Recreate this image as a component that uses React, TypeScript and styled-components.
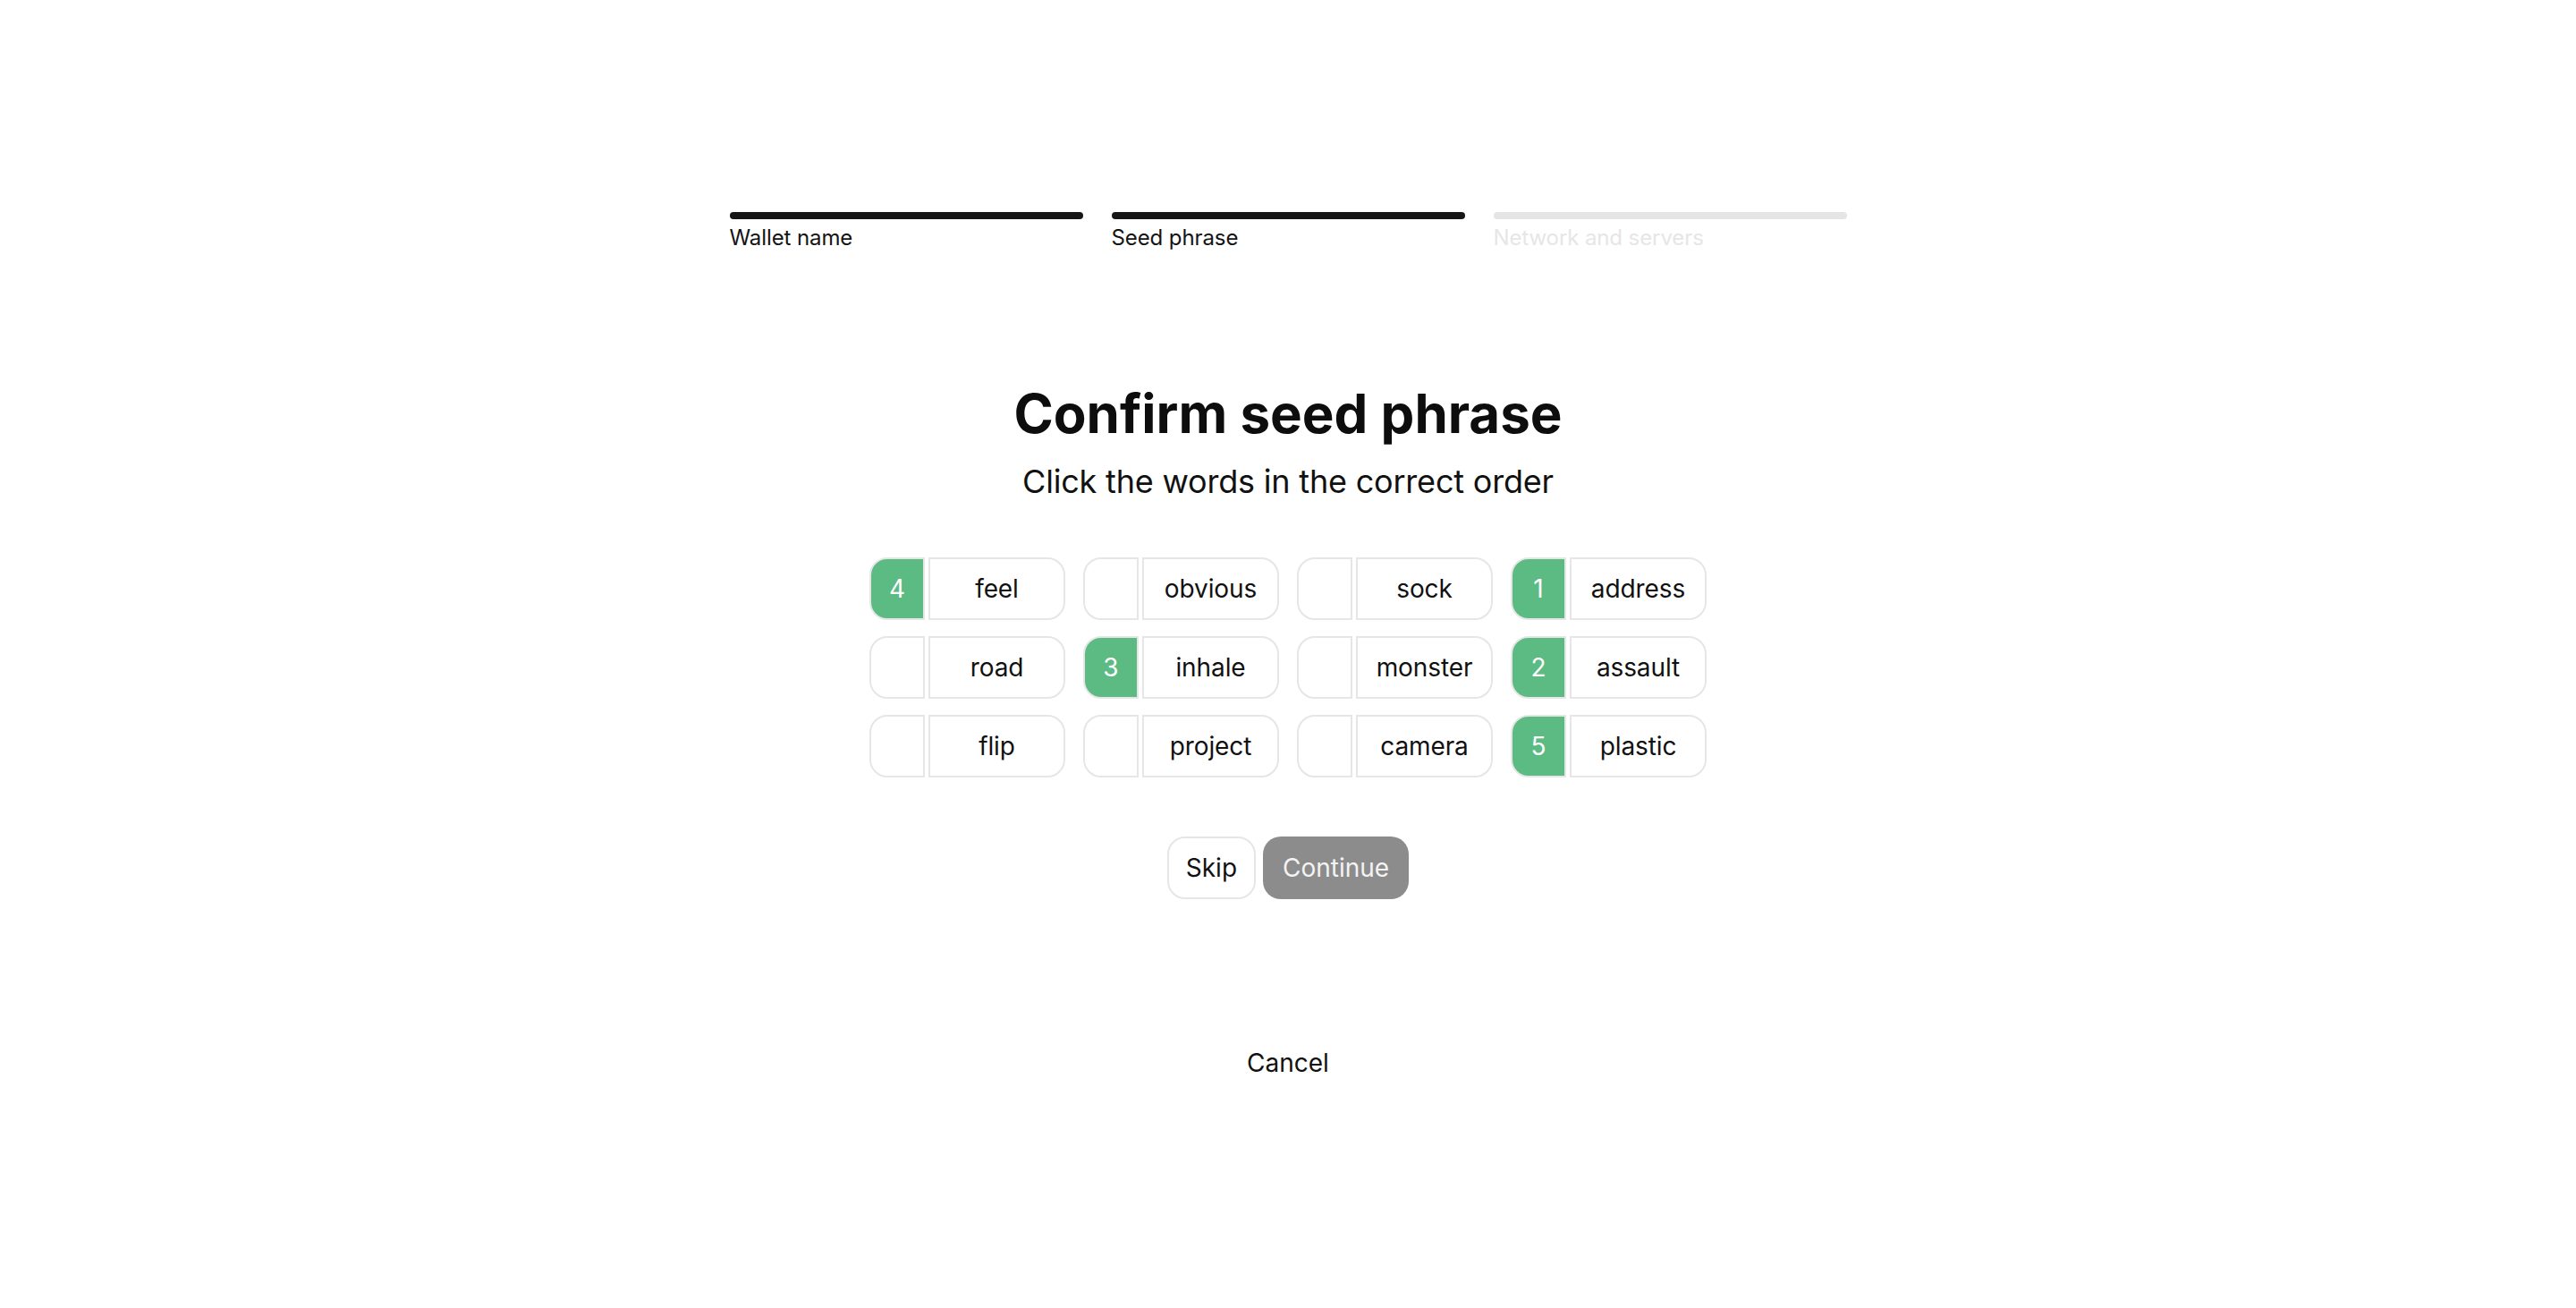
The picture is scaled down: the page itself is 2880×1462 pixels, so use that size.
import React from "react";
import styled, { createGlobalStyle } from "styled-components";

const Global = createGlobalStyle`
  html, body { margin: 0; padding: 0; background: #ffffff; }
  body { font-family: Inter, "Noto Sans", "Liberation Sans", sans-serif; color: #111111; }
`;

const Page = styled.main`
  display: flex;
  flex-direction: column;
  align-items: center;
  padding-top: 237px;
  min-height: 1462px;
  box-sizing: border-box;
`;

const Stepper = styled.div`
  display: grid;
  grid-template-columns: repeat(3, 395px);
  column-gap: 32px;
`;

const Step = styled.div`
  display: flex;
  flex-direction: column;
  gap: 7px;
`;

const Bar = styled.div<{ $active: boolean }>`
  height: 8px;
  border-radius: 4px;
  background: ${(p) => (p.$active ? "#161616" : "#e5e5e5")};
`;

const StepLabel = styled.span<{ $active: boolean }>`
  font-size: 24px;
  line-height: 1.2;
  letter-spacing: -0.1px;
  color: ${(p) => (p.$active ? "#141414" : "#e6e6e6")};
`;

const Title = styled.h1`
  margin: 145px 0 0;
  font-size: 60px;
  line-height: 1.2;
  font-weight: 700;
  letter-spacing: 0;
  color: #0d0d0d;
`;

const Subtitle = styled.p`
  margin: 19px 0 0;
  font-size: 36px;
  line-height: 1.2;
  letter-spacing: -0.2px;
  color: #111111;
`;

const WordGrid = styled.div`
  margin-top: 63px;
  display: grid;
  grid-template-columns: repeat(4, 219px);
  column-gap: 20px;
  row-gap: 18px;
`;

const Chip = styled.button`
  display: flex;
  gap: 4px;
  height: 70px;
  padding: 0;
  border: none;
  background: transparent;
  cursor: pointer;
  font-family: inherit;
`;

const NumberCell = styled.span<{ $filled: boolean }>`
  width: 62px;
  box-sizing: border-box;
  display: flex;
  align-items: center;
  justify-content: center;
  border: 2px solid #e6e6e6;
  border-radius: 20px 0 0 20px;
  background: ${(p) => (p.$filled ? "#5cba83" : "#ffffff")};
  color: #ffffff;
  font-size: 28px;
`;

const WordCell = styled.span`
  flex: 1;
  box-sizing: border-box;
  display: flex;
  align-items: center;
  justify-content: center;
  border: 2px solid #e6e6e6;
  border-radius: 0 20px 20px 0;
  background: #ffffff;
  color: #111111;
  font-size: 28px;
  padding-top: 1px;
  letter-spacing: -0.1px;
`;

const Actions = styled.div`
  margin-top: 66px;
  display: flex;
  gap: 8px;
`;

const Button = styled.button<{ $primary?: boolean }>`
  height: 70px;
  box-sizing: border-box;
  padding: 0 ${(p) => (p.$primary ? "22px" : "19px")};
  border-radius: 20px;
  border: ${(p) => (p.$primary ? "none" : "2px solid #e6e6e6")};
  background: ${(p) => (p.$primary ? "#8c8c8c" : "#ffffff")};
  color: ${(p) => (p.$primary ? "#f3f3f3" : "#111111")};
  font-family: inherit;
  font-size: 28px;
  letter-spacing: 0;
  cursor: pointer;
`;

const CancelLink = styled.button`
  margin-top: 167px;
  border: none;
  background: none;
  padding: 0;
  font-family: inherit;
  font-size: 28px;
  line-height: 1.2;
  letter-spacing: 0;
  color: #111111;
  cursor: pointer;
`;

const steps = [
  { label: "Wallet name", active: true },
  { label: "Seed phrase", active: true },
  { label: "Network and servers", active: false },
];

const words: { word: string; n?: number }[] = [
  { word: "feel", n: 4 },
  { word: "obvious" },
  { word: "sock" },
  { word: "address", n: 1 },
  { word: "road" },
  { word: "inhale", n: 3 },
  { word: "monster" },
  { word: "assault", n: 2 },
  { word: "flip" },
  { word: "project" },
  { word: "camera" },
  { word: "plastic", n: 5 },
];

export default function App() {
  return (
    <>
      <Global />
      <Page>
        <Stepper>
          {steps.map((s) => (
            <Step key={s.label}>
              <Bar $active={s.active} />
              <StepLabel $active={s.active}>{s.label}</StepLabel>
            </Step>
          ))}
        </Stepper>
        <Title>Confirm seed phrase</Title>
        <Subtitle>Click the words in the correct order</Subtitle>
        <WordGrid>
          {words.map((w) => (
            <Chip key={w.word}>
              <NumberCell $filled={w.n !== undefined}>{w.n ?? ""}</NumberCell>
              <WordCell>{w.word}</WordCell>
            </Chip>
          ))}
        </WordGrid>
        <Actions>
          <Button>Skip</Button>
          <Button $primary>Continue</Button>
        </Actions>
        <CancelLink>Cancel</CancelLink>
      </Page>
    </>
  );
}
